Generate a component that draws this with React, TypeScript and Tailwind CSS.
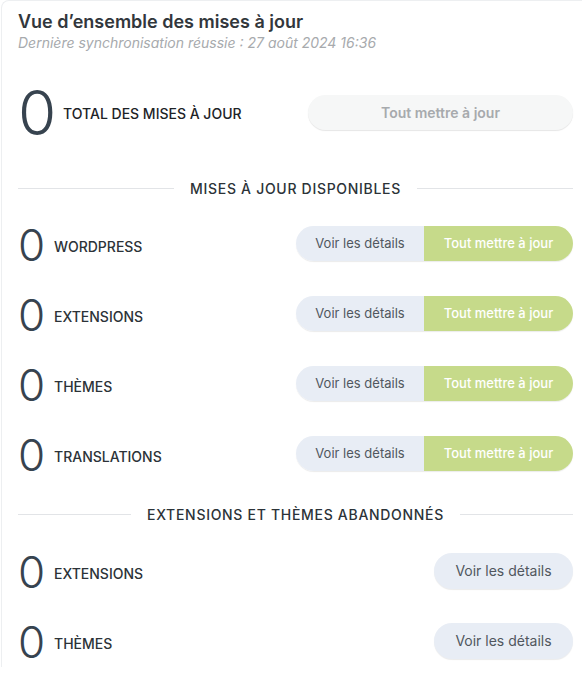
const font = { fontFamily: 'Inter, "Noto Sans", sans-serif' }

type Row = { label: string; count: number }

const available: Row[] = [
  { label: 'WordPress', count: 0 },
  { label: 'Extensions', count: 0 },
  { label: 'Thèmes', count: 0 },
  { label: 'Translations', count: 0 },
]

const abandoned: Row[] = [
  { label: 'Extensions', count: 0 },
  { label: 'Thèmes', count: 0 },
]

function Divider({ title, className }: { title: string; className?: string }) {
  return (
    <div className={`flex h-[20px] items-center gap-4 ${className ?? ''}`}>
      <div className="h-px flex-1 bg-[#e2e4e7]" />
      <span className="text-[14px] font-medium uppercase tracking-[0.05em] text-[#2c3338]">{title}</span>
      <div className="h-px flex-1 bg-[#e2e4e7]" />
    </div>
  )
}

function Count({ row }: { row: Row }) {
  return (
    <div className="flex items-center">
      <span className="w-[36px] text-[44px] font-light leading-none text-[#37434f]">{row.count}</span>
      <span className="pt-[2px] text-[14px] font-medium uppercase text-[#2c3338]">{row.label}</span>
    </div>
  )
}

function UpdateRow({ row }: { row: Row }) {
  return (
    <div className="flex h-[50px] items-center justify-between">
      <Count row={row} />
      <div className="-mt-[3px] flex h-[35px] w-[277px] overflow-hidden rounded-full text-[13px] shadow-[0_1px_1px_rgba(0,0,0,0.08)]">
        <button className="w-[128px] bg-[#e8edf5] text-[#50575e]">Voir les détails</button>
        <button className="flex-1 bg-[#c6da8a] font-medium text-white">Tout mettre à jour</button>
      </div>
    </div>
  )
}

function AbandonedRow({ row }: { row: Row }) {
  return (
    <div className="flex h-[50px] items-center justify-between">
      <Count row={row} />
      <button className="-mt-[3px] h-[36px] w-[139px] rounded-full bg-[#e8edf5] text-[14px] text-[#50575e] shadow-[0_1px_1px_rgba(0,0,0,0.08)]">
        Voir les détails
      </button>
    </div>
  )
}

export default function App() {
  return (
    <div className="h-[674px] w-[582px] overflow-hidden bg-white" style={font}>
      <div className="ml-px w-[620px] rounded-tl-lg border-l border-t border-[#edeff1] bg-white">
        <div className="w-[571px] pl-[16px] pt-[9px]">
          <h2 className="text-[18px] font-semibold leading-6 text-[#32373c]">Vue d’ensemble des mises à jour</h2>
          <p className="text-[14px] italic leading-[18px] text-[#a7aaad]">
            Dernière synchronisation réussie : 27 août 2024 16:36
          </p>

          <div className="mt-[30px] flex h-[62px] items-center justify-between">
            <div className="flex items-center">
              <span className="w-[45px] text-[62px] font-light leading-none text-[#37434f]">0</span>
              <span className="pt-[1px] text-[14px] font-medium uppercase text-[#1d2327]">Total des mises à jour</span>
            </div>
            <button className="-mt-[1px] h-[35px] w-[265px] rounded-full bg-[#f6f7f7] text-[14px] font-semibold text-[#a7aaad] shadow-[0_1px_1px_rgba(0,0,0,0.1)]">
              Tout mettre à jour
            </button>
          </div>

          <Divider title="Mises à jour disponibles" className="mt-[34px]" />

          <div className="mt-[22px] flex flex-col gap-5">
            {available.map((row) => (
              <UpdateRow key={row.label} row={row} />
            ))}
          </div>

          <Divider title="Extensions et thèmes abandonnés" className="mt-[24px]" />

          <div className="mt-[23px] flex flex-col gap-5">
            {abandoned.map((row) => (
              <AbandonedRow key={row.label} row={row} />
            ))}
          </div>
        </div>
      </div>
    </div>
  )
}
